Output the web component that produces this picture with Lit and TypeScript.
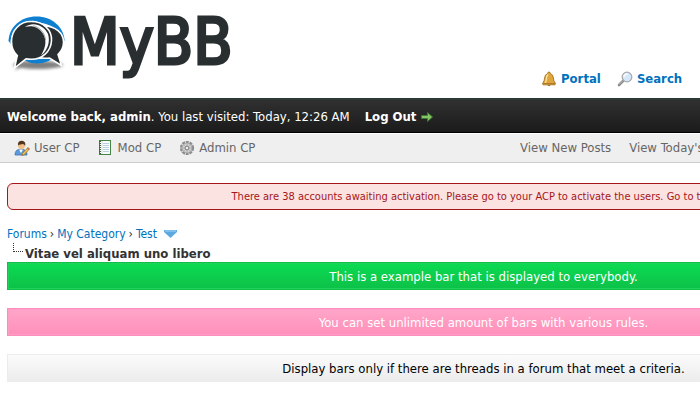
import { LitElement, html, css, svg } from "lit";
import { customElement } from "lit/decorators.js";

const logoMark = svg`
  <defs>
    <filter id="soft" x="-20%" y="-80%" width="140%" height="260%"><feGaussianBlur stdDeviation="1.6" /></filter>
  </defs>
  <ellipse cx="38" cy="65" rx="25" ry="4" fill="#555" opacity=".75" filter="url(#soft)" />
  <path d="M15 71 L18 60 L28 62 Z" fill="#888" opacity=".6" filter="url(#soft)" />
  <path d="M8.500 41 C9 27 21 16.500 36.500 16.500 C52 16.500 63.500 27 64.500 40 L60 52 Q50 63.500 37 63.500 Q30 63.500 24 60 Z" fill="#0f7fd0" />
  <path d="M10.500 43 Q11 29 24 22.500 L33 20.800 L46 24 Q63 30 63.500 42 L61 50 L51 58 Q38 60 24 59 L14 53 Z" fill="#fff" />
  <path d="M44 26 C55 26 63.800 33 63.500 42.500 C63.300 48 61 51.500 58 54.500 L61.500 65.500 L49.500 58 C41 59.500 34 56 32 50 Z" fill="#292f30" stroke="#fff" stroke-width="1.500" />
  <path d="M31 21.500 C43.500 21.500 52 30 51.500 40.500 C51 51.500 42 59.500 31 59.300 C29 59.300 27.500 59.200 26 58.800 L14.500 68 L17.300 55.500 C13.300 52 11.500 47 11.500 41.500 C11.500 30 20 21.500 31 21.500 Z" fill="#292f30" stroke="#fff" stroke-width="1.600" />
  <path d="M25 27 C33 21 44 25 48 34 C50.500 42 47.500 50.500 41 55.500 C46.800 46 46.500 39 42.500 33 C38.500 27 32 25 25 27 Z" fill="#fff" />
  <path d="M33 25.800 C40 27 45 33 45.500 40" fill="none" stroke="#7d8182" stroke-width=".7" />`;

const bell = svg`
  <path d="M8 1 Q6.600 1 6.600 2.500 Q3.800 3.500 3.600 7 Q3.500 10 1.500 12.500 L2 13.800 H14 L14.500 12.500 Q12.500 10 12.400 7 Q12.200 3.500 9.400 2.500 Q9.400 1 8 1Z" fill="#dfa63d" stroke="#9c6a1c" stroke-width=".8" />
  <path d="M7 3.500 Q5.400 5 5.300 8 Q5.200 10 4.200 12" fill="none" stroke="#fbe3a0" stroke-width="1.400" />
  <path d="M2 12.500 H14" stroke="#b57a24" />
  <path d="M6.500 14 Q8 16 9.500 14Z" fill="#86591b" />`;

const magnifier = svg`
  <path d="M6.500 9.500 L2 14" stroke="#888" stroke-width="2.600" stroke-linecap="round" />
  <path d="M6 9.500 L2 13.500" stroke="#c4c4c4" stroke-width="1" />
  <circle cx="10" cy="6" r="4.800" fill="#d5e7fa" stroke="#a9a9ae" stroke-width="1.300" />
  <path d="M6.800 6 Q7.500 3 10.500 3" fill="none" stroke="#fff" stroke-width="1.300" />`;

const userIcon = svg`
  <path d="M1 15 Q1 10 5 9.500 H9 Q13 10 13 15Z" fill="#5c9bdc" stroke="#3b72b3" stroke-width=".8" />
  <path d="M5 9.500 L7 13 L9 9.500Z" fill="#fff" />
  <circle cx="7.500" cy="6" r="3.300" fill="#f1bd86" />
  <path d="M4 6 Q3.200 .8 8 .8 Q12 1 11.200 6 Q10 3.800 8.500 4 Q5.500 5 4.900 4.500Z" fill="#51351f" />
  <path d="M14 7.500 L15.500 9 L10 14.800 L7.800 15.500 L8.500 13.200Z" fill="#f5c747" stroke="#94651e" stroke-width=".7" />
  <path d="M13.300 8 L15 9.600" stroke="#d15c55" stroke-width="1.300" />`;

const notebook = svg`
  <rect x="1.500" y=".5" width="11" height="14" fill="#fafcfe" stroke="#438343" />
  <path d="M2 1 V14" stroke="#3f5f3f" stroke-width="2" stroke-dasharray="1 1" />
  <path d="M5 3.500 H11 M5 5.500 H11 M5 7.500 H11 M5 9.500 H11 M5 11.500 H11" stroke="#b9cfe0" stroke-width="1" />
  <path d="M4 1 V14" stroke="#b5cdb5" stroke-width=".6" />`;

const gear = svg`
  <circle cx="8" cy="8" r="5.900" fill="none" stroke="#8d8d8d" stroke-width="2.400" stroke-dasharray="2.900 .807" />
  <circle cx="8" cy="8" r="4.900" fill="#d0d0d0" stroke="#999" stroke-width=".8" />
  <path d="M8 4 V12 M4 8 H12 M5.200 5.200 L10.800 10.800 M10.800 5.200 L5.200 10.800" stroke="#aaa" stroke-width=".8" />
  <circle cx="8" cy="8" r="1.900" fill="#efefef" stroke="#7c7c7c" stroke-width="1" />`;

const arrow = svg`<path d="M1.500 6.500 H7.500 V3.500 L12.500 8 L7.500 12.500 V9.500 H1.500Z" fill="#86c567" stroke="#3c7c32" />`;

const icon = (shape: unknown) => html`<svg class="icon" viewBox="0 0 16 16" aria-hidden="true">${shape}</svg>`;

@customElement("app-root")
export class AppRoot extends LitElement {
  static styles = css`
    :host {
      display: block;
      overflow: hidden;
      background: #fff;
      color: #333;
      font: 13px/18px "DejaVu Sans Condensed", "DejaVu Sans", sans-serif;
      font-stretch: condensed;
    }
    .page { min-width: 967px; white-space: nowrap; }
    a { color: #0072bc; text-decoration: none; }
    .icon { width: 16px; height: 16px; flex: none; }
    .header {
      display: flex;
      justify-content: space-between;
      align-items: flex-end;
      height: 98px;
    }
    .logo { display: flex; gap: 2px; align-self: flex-start; padding: 2px 0 0 6px; color: #292f30; }
    .mark { width: 62px; height: 62px; margin-top: 12px; }
    .word { font-size: 64px; line-height: 80px; -webkit-text-stroke: 3px #292f30; }
    .links { display: flex; width: 426px; gap: 16px; padding-bottom: 10px; font-weight: bold; }
    .item { display: flex; align-items: center; gap: 4px; }
    .welcome {
      display: flex;
      align-items: center;
      box-sizing: border-box;
      height: 35px;
      padding: 2px 7px 0;
      gap: 15px;
      border-top: 2px solid #2a3a35;
      border-bottom: 1px solid #000;
      background: linear-gradient(#303030, #1b1b1b);
      color: #fff;
    }
    .welcome a { color: #fff; font-weight: bold; }
    .tools {
      display: flex;
      justify-content: space-between;
      align-items: center;
      box-sizing: border-box;
      height: 30px;
      padding-left: 14px;
      border-top: 1px solid #fff;
      border-bottom: 1px solid #ccc;
      background: #efefef;
    }
    .tools a { color: #666; }
    .group { display: flex; gap: 18px; }
    .views { width: 447px; }
    .content { padding: 20px 7px; }
    .alert {
      box-sizing: border-box;
      height: 27px;
      border: 1px solid #a5161a;
      border-radius: 6px;
      background: #fbe3e2;
      color: #a5161a;
      font-size: 11px;
      line-height: 26px;
      text-align: center;
    }
    .crumbs { display: flex; align-items: center; gap: 3px; margin-top: 15px; font-size: 12px; }
    .caret { width: 13px; height: 8px; margin-left: 4px; }
    .current { display: flex; gap: 2px; }
    .branch { width: 9px; height: 8px; margin-left: 6px; border-left: 1px dotted #333; border-bottom: 1px dotted #333; }
    h1 { margin: 2px 0 0; font-size: 13px; line-height: 17px; }
    .bars { display: grid; gap: 18px; }
    .bar {
      box-sizing: border-box;
      height: 28px;
      border: 1px solid;
      line-height: 27px;
      text-align: center;
    }
    .green { color: #fff; border-color: #0fbf49; background: linear-gradient(#0cdb52, #0cc148); box-shadow: inset 0 0 0 1px #1fd35a; }
    .pink { color: #fff; border-color: #ff8dbb; background: linear-gradient(#ffa6c9, #ff8fba); box-shadow: inset 0 0 0 1px #ff9fc7; }
    .plain { color: #000; border-color: #ececec; background: linear-gradient(#fbfbfb, #ececec); }
  `;

  render() {
    return html`
      <div class="page">
        <header class="header">
          <div class="logo">
            <svg class="mark" viewBox="6 14 62 62" aria-hidden="true">${logoMark}</svg>
            <span class="word">MyBB</span>
          </div>
          <nav class="links">
            <a class="item" href="#portal">${icon(bell)}Portal</a>
            <a class="item" href="#search">${icon(magnifier)}Search</a>
          </nav>
        </header>
        <div class="welcome">
          <span><b>Welcome back, admin</b>. You last visited: Today, 12:26 AM</span>
          <a class="item" href="#logout">Log Out ${icon(arrow)}</a>
        </div>
        <nav class="tools">
          <div class="group">
            <a class="item" href="#user">${icon(userIcon)}User CP</a>
            <a class="item" href="#mod">${icon(notebook)}Mod CP</a>
            <a class="item" href="#admin">${icon(gear)}Admin CP</a>
          </div>
          <div class="group views">
            <a href="#new">View New Posts</a>
            <a href="#today">View Today's Posts</a>
          </div>
        </nav>
        <main class="content">
          <div class="alert">There are 38 accounts awaiting activation. Please go to your ACP to activate the users. Go to the ACP</div>
          <nav class="crumbs">
            <a href="#forums">Forums</a><span>›</span><a href="#category">My Category</a><span>›</span><a href="#test">Test</a>
            <svg class="caret" viewBox="0 0 13 8" aria-hidden="true">
              <path d="M0 0 H13 V2 L6.500 8 L0 2Z" fill="#5ba9e0" /><path d="M1 1 H12" stroke="#a4d4f4" />
            </svg>
          </nav>
          <div class="current"><span class="branch"></span><h1>Vitae vel aliquam uno libero</h1></div>
          <div class="bars">
            <div class="bar green">This is a example bar that is displayed to everybody.</div>
            <div class="bar pink">You can set unlimited amount of bars with various rules.</div>
            <div class="bar plain">Display bars only if there are threads in a forum that meet a criteria.</div>
          </div>
        </main>
      </div>
    `;
  }
}
